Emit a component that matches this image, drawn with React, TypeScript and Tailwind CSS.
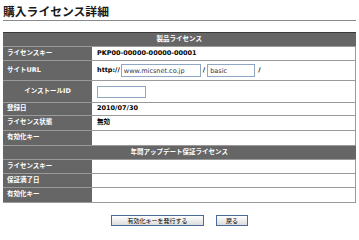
import { FC } from "react";

const jp = "font-['DejaVu_Sans','Noto_Sans_CJK_JP',sans-serif]";

const Label: FC<{ children?: React.ReactNode; center?: boolean }> = ({ children, center }) => (
  <td
    className={`w-[89px] border-b border-[#9a9a9a] bg-[#666666] px-[4px] text-[6.5px] font-bold text-white ${center ? "text-center" : ""}`}
  >
    {children}
  </td>
);

const Value: FC<{ children?: React.ReactNode }> = ({ children }) => (
  <td className="border-b border-r border-[#9a9a9a] bg-white px-[5px] text-[6.5px] font-bold text-black">{children}</td>
);

const Header: FC<{ title: string }> = ({ title }) => (
  <tr className="h-[14px]">
    <td
      colSpan={2}
      className="border-t border-b border-t-[#3a3a3a] border-b-[#9a9a9a] bg-[#666666] text-center text-[6.5px] font-bold text-white"
    >
      {title}
    </td>
  </tr>
);

export default function App() {
  return (
    <div className={`h-[240px] w-[359px] bg-white px-[3px] pt-[3px] ${jp}`}>
      <h1 className="w-[353px] border-b border-[#8a8a8a] pb-[2px] font-['Noto_Sans_CJK_JP',sans-serif] text-[11.8px] font-semibold leading-[15px] text-[#1a1a1a]">
        購入ライセンス詳細
      </h1>
      <table className="mt-[11px] w-[353px] border-collapse">
        <tbody>
          <Header title="製品ライセンス" />
          <tr className="h-[14px]">
            <Label>ライセンスキー</Label>
            <Value>PKP00-00000-00000-00001</Value>
          </tr>
          <tr className="h-[20px]">
            <Label>サイトURL</Label>
            <Value>
              <div className="flex items-center">
                <span>http://</span>
                <input
                  readOnly
                  value="www.micsnet.co.jp"
                  className="ml-[1px] h-[13px] w-[80px] border border-[#8fa6c4] px-[2px] text-[6.5px] font-normal text-[#334] outline-none"
                />
                <span className="mx-[2px]">/</span>
                <input
                  readOnly
                  value="basic"
                  className="h-[13px] w-[48px] border border-[#8fa6c4] px-[2px] text-[6.5px] font-normal text-[#334] outline-none"
                />
                <span className="ml-[3px]">/</span>
              </div>
            </Value>
          </tr>
          <tr className="h-[22px]">
            <Label center>インストールID</Label>
            <Value>
              <input
                readOnly
                className="block h-[12px] w-[49px] border border-[#8fa6c4] px-[2px] text-[6.5px] outline-none"
              />
            </Value>
          </tr>
          <tr className="h-[13px]">
            <Label>登録日</Label>
            <Value>2010/07/30</Value>
          </tr>
          <tr className="h-[15px]">
            <Label>ライセンス状態</Label>
            <Value>無効</Value>
          </tr>
          <tr className="h-[15px]">
            <Label>有効化キー</Label>
            <Value />
          </tr>
          <Header title="年間アップデート保証ライセンス" />
          <tr className="h-[14px]">
            <Label>ライセンスキー</Label>
            <Value />
          </tr>
          <tr className="h-[14px]">
            <Label>保証満了日</Label>
            <Value />
          </tr>
          <tr className="h-[15px]">
            <Label>有効化キー</Label>
            <Value />
          </tr>
        </tbody>
      </table>
      <div className="mt-[12px] flex justify-center gap-[12px]">
        <button
          type="button"
          className="h-[11px] w-[93px] border border-[#4a6a9a] bg-gradient-to-b from-white to-[#dcdcdc] text-[6px] leading-[9px] text-black"
        >
          有効化キーを発行する
        </button>
        <button
          type="button"
          className="h-[11px] w-[32px] border border-[#4a6a9a] bg-gradient-to-b from-white to-[#dcdcdc] text-[6px] leading-[9px] text-black"
        >
          戻る
        </button>
      </div>
    </div>
  );
}
